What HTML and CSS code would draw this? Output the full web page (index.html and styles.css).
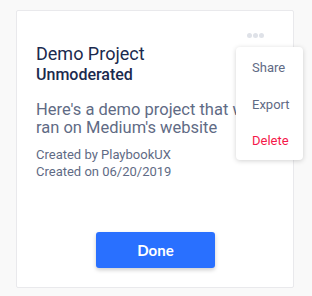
FILE: index.html
```html
<!DOCTYPE html>
<html>
  <head>
    <meta charset="UTF-8" />
    <title>Demo Project</title>
    <link rel="stylesheet" href="styles.css">
  </head>
  <body>
    <div class="card">
      <button class="more" aria-label="More options">
        <span></span><span></span><span></span>
      </button>
      <ul class="menu">
        <li>Share</li>
        <li>Export</li>
        <li class="danger">Delete</li>
      </ul>

      <h2 class="title">Demo Project</h2>
      <h3 class="type">Unmoderated</h3>
      <p class="desc">Here's a demo project that we ran on Medium's website</p>
      <p class="meta">Created by PlaybookUX<br />Created on 06/20/2019</p>

      <button class="done">Done</button>
    </div>
  </body>
</html>
```

FILE: styles.css
```css
* {
  box-sizing: border-box;
}
body {
  margin: 0;
  padding: 10px 18px 8px 16px;
  background-color: #f9f9f9;
  font-family: Roboto, "Liberation Sans", sans-serif;
}
.card {
  position: relative;
  display: flex;
  flex-direction: column;
  height: 278px;
  padding: 32px 14px 19px 19px;
  background: #fff;
  border: 1px solid #e9e9ec;
  border-radius: 2px;
}
.more {
  position: absolute;
  top: 22px;
  right: 29px;
  display: flex;
  gap: 1px;
  padding: 0;
  border: none;
  background: none;
  cursor: pointer;
}
.more span {
  width: 5px;
  height: 5px;
  border-radius: 50%;
  background: #dfe2e8;
}
.menu {
  position: absolute;
  top: 36px;
  right: -10px;
  width: 67px;
  margin: 0;
  padding: 3px 0 0;
  list-style: none;
  height: 113px;
  background: #fff;
  border-radius: 4px;
  box-shadow: 0 1px 5px rgba(0, 0, 0, 0.18);
  z-index: 2;
}
.menu li {
  height: 36.5px;
  padding: 10px 0 0 16px;
  font-size: 13px;
  color: #5f6b85;
}
.menu li.danger {
  color: #f5184a;
}
.title {
  margin: 0;
  font-size: 18px;
  line-height: 22px;
  font-weight: 400;
  color: #1b2a4e;
}
.type {
  margin: 0;
  font-size: 16px;
  line-height: 19px;
  font-weight: 500;
  color: #1b2a4e;
}
.desc {
  margin: 17px 0 0;
  font-size: 16.5px;
  line-height: 18px;
  color: #5f6b85;
}
.meta {
  margin: 9px 0 0;
  font-size: 13px;
  line-height: 17px;
  color: #5f6b85;
}
.done {
  align-self: center;
  margin-top: auto;
  margin-right: 4px;
  width: 119px;
  height: 36px;
  border: none;
  border-radius: 3px;
  background-color: #2970ff;
  color: #fff;
  font-family: Lato, sans-serif;
  font-size: 15px;
  font-weight: 700;
  box-shadow: 0 2px 4px rgba(0, 0, 0, 0.2);
  cursor: pointer;
}
```
